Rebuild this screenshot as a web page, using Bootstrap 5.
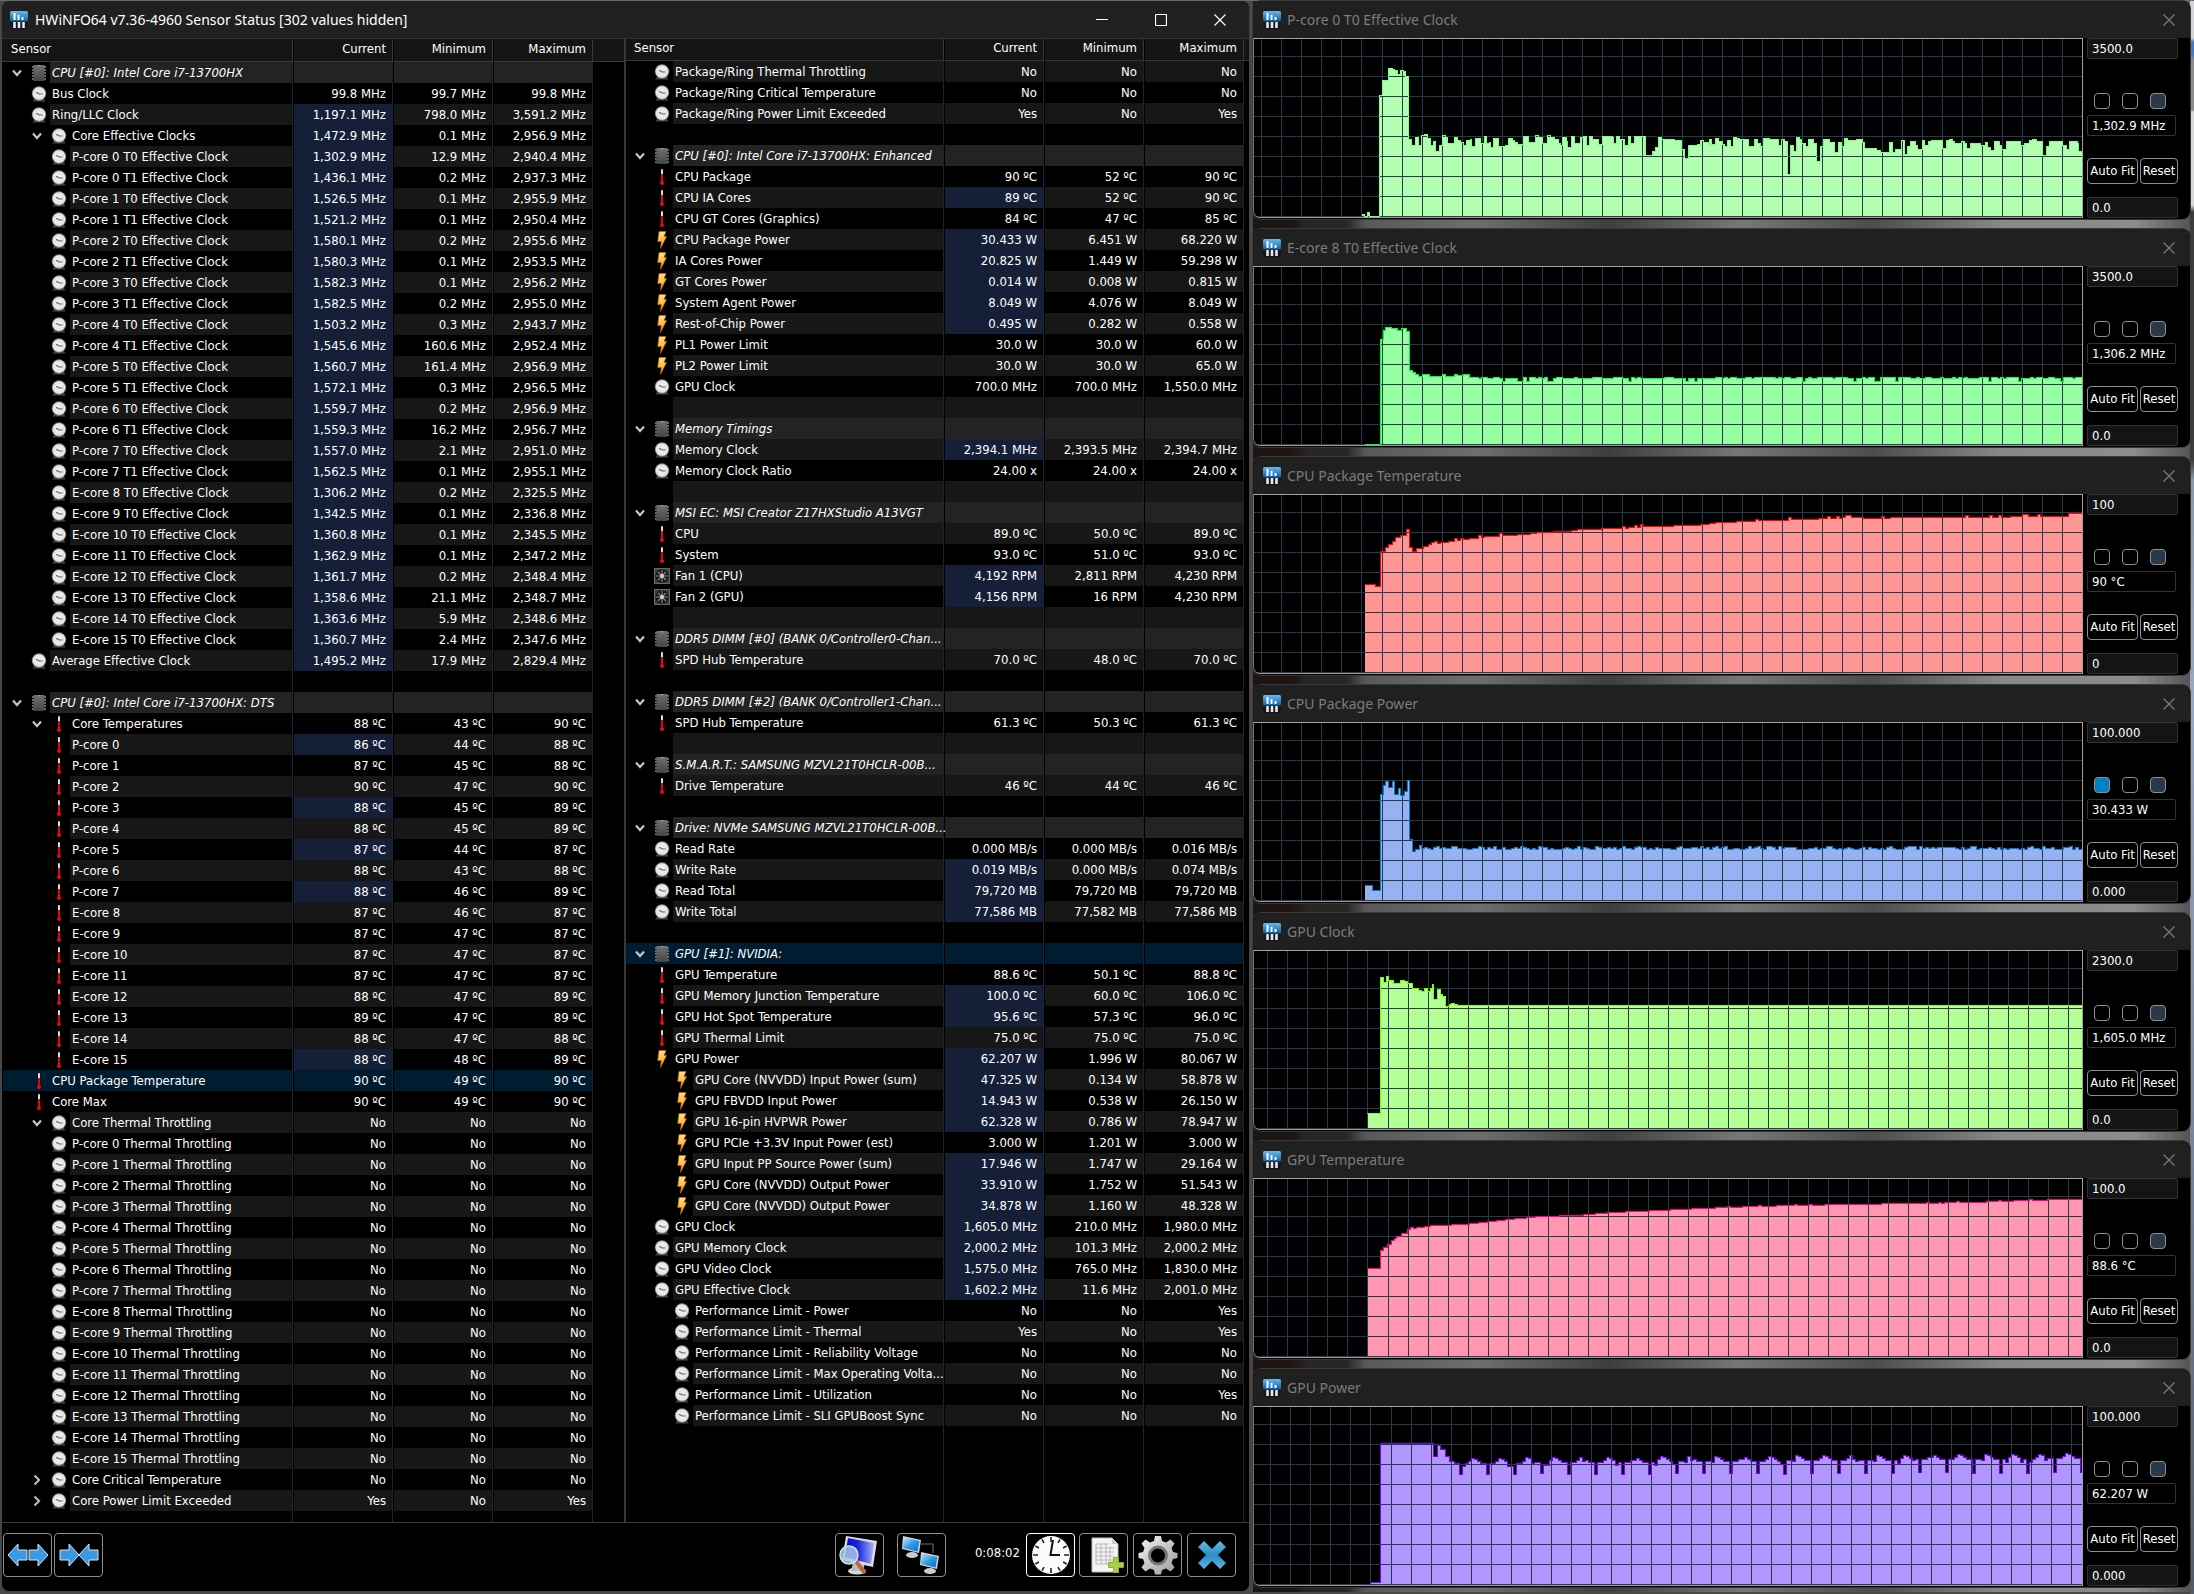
<!DOCTYPE html>
<html lang="en" data-bs-theme="dark">
<head>
<meta charset="utf-8">
<meta name="viewport" content="width=device-width, initial-scale=1">
<title>HWiNFO64 Sensor Status</title>
<link href="https://cdn.jsdelivr.net/npm/bootstrap@5.3.0/dist/css/bootstrap.min.css" rel="stylesheet">
<style>
  :root { --ui: "DejaVu Sans Condensed", "DejaVu Sans", sans-serif; --caption: "Noto Sans", "Open Sans", sans-serif; }
  body { background: #4a4a4a; font-family: var(--ui); font-size: 13px; line-height: 20px; color: #fff; }
  .desktop { display: grid; grid-template-columns: minmax(0, 1249fr) minmax(0, 937fr); gap: 3px; padding: 1px 4px 3px 1px; min-height: 100vh;
    background:
      linear-gradient(#6a6a6a, #6a6a6a) top / 100% 1px no-repeat,
      linear-gradient(#d4d4d8 0 38px, #4a78b8 42px 54px, #8c8c8c 60px 110px, #d8d8d8 112px 205px, #3c3c3c 212px 460px, #8c98a8 480px, #98a8c0 700px, #7c88a0 1100px, #555b68 1590px) right / 4px 100% no-repeat,
      #484848; }
  .win { background: #000; border-radius: 8px; overflow: hidden; }
  .caption-bar { height: 37px; background: #202020; font-family: var(--caption); font-size: 14px; }
  .caption-bar button { background: none; border: 0; padding: 0; color: inherit; display: flex; align-items: center; justify-content: center; }
  .win-btn { width: 59px; height: 37px; }
  .app-pic { flex: none; margin: 0 7px 0 8px; }

  .main-win { display: flex; flex-direction: column; border: 1px solid #444; border-top: 0; }
  .panes { display: grid; grid-template-columns: minmax(0, 622fr) minmax(0, 625fr); border-bottom: 1px solid #3a3a3a; }
  .pane { display: flex; border-top: 1px solid #333; background: linear-gradient(#141414 0 22px, #383838 22px 23px, #000 23px); }
  .pane-left { padding: 1px 31px 0 1px; }
  .pane-right { padding-right: 5px; border-left: 2px solid #383838; background: linear-gradient(#141414 0 21px, #383838 21px 22px, #000 22px); }
  .sensors { width: 100%; table-layout: fixed; border-collapse: separate; border-spacing: 0; }
  .sensors th, .sensors td { padding: 0; border-right: 1px solid #1b2233; white-space: nowrap; font-weight: 400; line-height: 21px; }
  .sensors thead th { height: 22px; line-height: 18px; background: #141414; border-color: #383838; border-bottom: 1px solid #383838; vertical-align: top; }
  .sensors thead th:first-child { padding-left: 8px; }
  .sensors .num { width: 100px; text-align: right; padding-right: 6px; background-clip: padding-box; border-left: 1px solid #000; }
  .sensors tbody tr, .sensors tbody .num { height: 21px; }
  .sensors tbody tr.filler, .sensors tbody tr.filler td { height: auto; }
  #leftSensors tr.filler td { height: 11px; }
  .namecell { display: flex; height: 21px; align-items: stretch; }
  .namecell .twist { width: 28px; display: flex; align-items: center; justify-content: center; }
  .namecell .pic { width: 19px; display: flex; align-items: center; }
  .namecell .txt { flex: 1 1 0; min-width: 0; padding-left: 2px; }
  .deep .namecell { padding-left: 20px; }
  .even .txt, .even .num { background-color: #171717; }
  .group .txt, .group .num { background-color: #232323; }
  .group .txt { font-style: italic; }
  .picked td, .picked .txt, .picked .num { background-color: #001c30; }
  .sensors .changed { background-color: #152038; }

  .toolbar-row { padding: 10px 13px 14px 1px; flex: 1; }
  .tool { width: 49px; height: 44px; background: #000; border: 1px solid #909090; border-radius: 4px; padding: 0; display: flex; align-items: center; justify-content: center; }
  .tool.active-tool { border-color: #fff; }
  .shrink { margin-left: 2px; }
  .remote { margin-left: 13px; }
  .uptime { margin: 0 6px 4px 29px; }
  .log { margin-left: 4px; }
  .spaced { margin-left: 5px; }

  .charts { display: flex; flex-direction: column; gap: 10px;
    background:
      linear-gradient(90deg, #1c1511 0 4%, #2a2624 6% 10%, transparent 12%),
      linear-gradient(90deg, #555 10%, #6e6e6e 24%, #3e3e3e 38%, #777 52%, #4c4c4c 66%, #888 80%, #8c8c8c 94%, #555 100%); }
  .chart-win { color: #7c7c7c; height: 218px; box-shadow: 0 0 0 1px #3a3a3a; flex: none; }
  .chart-win .app-pic { margin-left: 10px; margin-right: 6px; }
  .graph-close { width: 42px; height: 37px; }
  .plot { flex: 1 1 0; min-width: 0; height: 180px; border: 1px solid #a0a0a0; border-left-color: #777; border-bottom-left-radius: 7px; overflow: hidden; }
  .plot svg { display: block; width: 100%; height: 178px; }
  .side { width: 107px; padding: 0 0 0 4px; color: #fff; }
  .side input { display: block; width: 91px; background: #141414; color: #fff; border: 1px solid #333; border-radius: 2px; padding: 0 4px; font: inherit; line-height: 18px; }
  .field { height: 21px; }
  .side .reading { background: #000; width: 89px; height: 21px; }
  .swatches { gap: 12px; margin: 34px 0 6px 7px; }
  .swatch { width: 16px; height: 16px; padding: 0; border: 1px solid #909090; border-radius: 4px; background: #000; }
  .swatch-grid { background: #293949; }
  .fits { gap: 2px; margin: 22px 0 13px; }
  .fits button { height: 26px; background: #000; color: #fff; border: 1px solid #909090; border-radius: 4px; padding: 0; }
  .fit { width: 51px; } .reset { width: 38px; }
</style>
<script src="https://cdn.jsdelivr.net/npm/bootstrap@5.3.0/dist/js/bootstrap.bundle.min.js"></script>
</head>
<body>

<svg width="0" height="0" class="position-absolute" aria-hidden="true">
  <defs>
    <linearGradient id="gBlue" x1="0" y1="0" x2="0" y2="1"><stop offset="0" stop-color="#6cb8e8"/><stop offset="1" stop-color="#0c62a4"/></linearGradient>
    <linearGradient id="gBolt" x1="0" y1="0" x2="0" y2="1"><stop offset="0" stop-color="#ffe08a"/><stop offset="1" stop-color="#ff9800"/></linearGradient>
    <linearGradient id="gChip" x1="0" y1="0" x2="0" y2="1"><stop offset="0" stop-color="#707070"/><stop offset="1" stop-color="#454545"/></linearGradient>
    <linearGradient id="gSilver" x1="0" y1="0" x2="1" y2="1"><stop offset="0" stop-color="#f4f4f4"/><stop offset="1" stop-color="#9a9a9a"/></linearGradient>
    <linearGradient id="gScreen" x1="0" y1="0" x2="1" y2="1"><stop offset="0" stop-color="#bfe6fb"/><stop offset=".5" stop-color="#2f9be4"/><stop offset="1" stop-color="#0a6cc4"/></linearGradient>
    <linearGradient id="gDeep" x1="0" y1="0" x2="1" y2="0"><stop offset="0" stop-color="#0808c0"/><stop offset=".45" stop-color="#1828d8"/><stop offset="1" stop-color="#a8b4f8"/></linearGradient>
    <linearGradient id="gClose" x1="0" y1="0" x2="0" y2="1"><stop offset="0" stop-color="#6cb8e0"/><stop offset=".5" stop-color="#2c8cc8"/><stop offset="1" stop-color="#5cb4e4"/></linearGradient>
    <symbol id="i-app" viewBox="0 0 18 18"><rect width="18" height="18" rx="2" fill="#15181c"/><rect x="0" y="0" width="18" height="10.500" rx="1.500" fill="url(#gBlue)"/><path d="M4.500 2v7M8.500 4v5M12.500 6v3" stroke="#fff" stroke-width="2"/><path d="M4.500 11v6M9 11v6M13.500 11v6" stroke="#e8e8e8" stroke-width="2.600"/></symbol>
    <symbol id="i-g" viewBox="0 0 16 18"><path d="M1 3h14M1 6h14M1 9h14M1 12h14M1 15h14" stroke="#8a8a8a" stroke-width="1.300"/><rect x="2.500" y="1" width="11" height="16" fill="url(#gChip)"/><path d="M6.500 1a1.500 1.500 0 0 0 3 0z" fill="#999"/></symbol>
    <symbol id="i-c" viewBox="0 0 16 18"><path d="M3 14h10l1.500 2.500h-13z" fill="#444"/><circle cx="8" cy="8.500" r="7.200" fill="#8c8c8c"/><circle cx="8" cy="8.500" r="6.200" fill="#ececec"/><circle cx="8" cy="8.500" r="4.600" fill="none" stroke="#c8c8c8" stroke-width=".8" stroke-dasharray="1 1.400"/><path d="M5 7.500l3.500 1.300 3 .2" stroke="#555" stroke-width="1.100" fill="none"/><circle cx="8.500" cy="9" r="1" fill="#c88"/></symbol>
    <symbol id="i-t" viewBox="0 0 16 18"><rect x="7" y="1" width="2" height="12" rx="1" fill="#ddd"/><rect x="7" y="6" width="2" height="9" fill="#e00808"/><circle cx="8" cy="15" r="2" fill="#f00808"/></symbol>
    <symbol id="i-p" viewBox="0 0 16 18"><path d="M5 0.500h7L10 5.500h2.500L6.500 17.500l.8-7H3.700z" fill="url(#gBolt)" stroke="#b86a00" stroke-width=".6"/></symbol>
    <symbol id="i-f" viewBox="0 0 16 18"><rect x=".5" y="1.500" width="15" height="15" fill="#3c3c3c" stroke="#6a6a6a"/><circle cx="8" cy="9" r="6.600" fill="#161616"/><path d="M8 3v12M2 9h12M4 5l8 8M12 5l-8 8" stroke="#8c8c8c" stroke-width="1.100"/><circle cx="8" cy="9" r="2" fill="#e8c8c8"/></symbol>
    <symbol id="i-v" viewBox="0 0 12 12"><path d="M2 3.500l4 4.500 4-4.500" fill="none" stroke="#c4c4c4" stroke-width="2.200"/></symbol>
    <symbol id="i-r" viewBox="0 0 12 12"><path d="M3.500 1.500l4.500 4.500-4.500 4.500" fill="none" stroke="#b8b8b8" stroke-width="2.200"/></symbol>
    <symbol id="i-x" viewBox="0 0 12 12"><path d="M0.500 0.500l11 11M11.500 .5l-11 11" stroke="currentColor" stroke-width="1.100" fill="none"/></symbol>
  </defs>
</svg>

<main class="desktop">
  <section class="win main-win" aria-label="Sensor Status">
    <header class="caption-bar d-flex align-items-center">
      <svg width="18" height="18" class="app-pic"><use href="#i-app"/></svg>
      <span class="flex-fill text-truncate">HWiNFO64 v7.36-4960 Sensor Status [302 values hidden]</span>
      <button class="win-btn" aria-label="Minimize"><svg width="12" height="12" viewBox="0 0 12 12"><path d="M0 5.500h12" stroke="#fff"/></svg></button>
      <button class="win-btn" aria-label="Maximize"><svg width="12" height="12" viewBox="0 0 12 12"><rect x=".5" y=".5" width="11" height="11" rx="1" fill="none" stroke="#fff" stroke-width="1.200"/></svg></button>
      <button class="win-btn" aria-label="Close"><svg width="12" height="12"><use href="#i-x"/></svg></button>
    </header>

    <div class="panes">
      <div class="pane pane-left"><table class="sensors" id="leftSensors"></table></div>
      <div class="pane pane-right"><table class="sensors" id="rightSensors"></table></div>
    </div>

    <footer class="toolbar-row d-flex align-items-center">
      <button class="tool" aria-label="Expand columns"><svg width="42" height="28" viewBox="0 0 42 28"><g fill="#3a98e4" stroke="#d4e4f0"><path d="M1 14L11 3v6h9v10h-9v6z"/><path d="M41 14L31 3v6h-9v10h9v6z"/></g></svg></button>
      <button class="tool shrink" aria-label="Shrink columns"><svg width="42" height="28" viewBox="0 0 42 28"><g fill="#3a98e4" stroke="#d4e4f0"><path d="M21 14L11 3v6H2v10h9v6z"/><path d="M21 14L31 3v6h9v10h-9v6z"/></g></svg></button>
      <button class="tool ms-auto" aria-label="System summary"><svg width="40" height="40" viewBox="0 0 40 40"><ellipse cx="18" cy="36" rx="9" ry="3.500" fill="#d8d8d8"/><path d="M14 28h12l-2 8H12z" fill="#bbb"/><path d="M7 1l31 5-4 26L3 25z" fill="#dcdce4"/><path d="M9 3l26 5-3 21L6 22z" fill="url(#gDeep)"/><path d="M17 26l8 11" stroke="#b86a3c" stroke-width="4" stroke-linecap="round"/><circle cx="10" cy="20" r="9" fill="#a8c8e8" fill-opacity=".85" stroke="#d8e0e8" stroke-width="1.500"/></svg></button>
      <button class="tool remote" aria-label="Remote sensors"><svg width="40" height="40" viewBox="0 0 40 40"><path d="M20 9h12v9" fill="none" stroke="#777"/><g id="pc"><ellipse cx="11" cy="20" rx="6" ry="3" fill="#ccc"/><path d="M2 1l18 4-2 13L1 14z" fill="#cfd8e0"/><path d="M3 2.500l15.500 3.500-2 10.500L2 13z" fill="url(#gScreen)"/></g><use href="#pc" x="18" y="16"/></svg></button>
      <span class="uptime">0:08:02</span>
      <button class="tool active-tool" aria-label="Reset clock"><svg width="40" height="40" viewBox="0 0 40 40"><circle cx="20" cy="20" r="19" fill="#fbfbfb"/><g stroke="#222" stroke-width="1.600"><path d="M20 2v5M20 33v5M2 20h5M33 20h5"/><path d="M11 4.400l2 3.500M29 4.400l-2 3.500M11 35.600l2-3.500M29 35.600l-2-3.500M4.400 11l3.500 2M35.600 11l-3.500 2M4.400 29l3.500-2M35.600 29l-3.500-2"/></g><path d="M29 20H19.500L22 5" fill="none" stroke="#111" stroke-width="2"/></svg></button>
      <button class="tool log" aria-label="Log to file"><svg width="40" height="40" viewBox="0 0 40 40"><path d="M8 3h20l6 6v28H8z" fill="#f4f4f0" stroke="#bbb"/><path d="M28 3v6h6z" fill="#ccc"/><path d="M12 9h13M12 13h18M12 17h18M12 21h18M12 25h18M12 29h16M12 9v20M17 9v20M22 9v20M26 11v18" stroke="#b8b8b8" fill="none"/><path d="M29.500 22.500h5v5h5v5h-5v5h-5v-5h-5v-5h5z" fill="#a8d048" stroke="#88b030"/></svg></button>
      <button class="tool spaced" aria-label="Settings"><svg width="40" height="40" viewBox="0 0 40 40"><path d="M17 1h6l1 5 4 1.500 4.500-3 4 4-3 4.500L35 17l4.500 1v5L35 24l-1.500 4 3 4.500-4 4-4.500-3L24 35l-1 4.500h-6L16 35l-4-1.500-4.500 3-4-4 3-4.500L5 24 .5 23v-5L5 17l1.500-4-3-4.500 4-4 4.500 3L16 6z" fill="url(#gSilver)"/><circle cx="20" cy="20.500" r="8.500" fill="#000" stroke="#777" stroke-width="3"/></svg></button>
      <button class="tool spaced" aria-label="Close sensors"><svg width="32" height="32" viewBox="0 0 32 32"><path d="M8 2l8 8 8-8 6 6-8 8 8 8-6 6-8-8-8 8-6-6 8-8-8-8z" fill="url(#gClose)"/></svg></button>
    </footer>
  </section>

  <section class="charts" id="charts" aria-label="Sensor graphs"></section>
</main>

<script>
/* Row format: kind, depth, name, current, minimum, maximum, flags.
   kind: g group, c counter, t temperature, p power, f fan. flags: * changed, v open, > closed, s selected */
const clocks = [
  ["P-core 0 T0","1,302.9","12.9","2,940.4"],["P-core 0 T1","1,436.1","0.2","2,937.3"],["P-core 1 T0","1,526.5","0.1","2,955.9"],["P-core 1 T1","1,521.2","0.1","2,950.4"],
  ["P-core 2 T0","1,580.1","0.2","2,955.6"],["P-core 2 T1","1,580.3","0.1","2,953.5"],["P-core 3 T0","1,582.3","0.1","2,956.2"],["P-core 3 T1","1,582.5","0.2","2,955.0"],
  ["P-core 4 T0","1,503.2","0.3","2,943.7"],["P-core 4 T1","1,545.6","160.6","2,952.4"],["P-core 5 T0","1,560.7","161.4","2,956.9"],["P-core 5 T1","1,572.1","0.3","2,956.5"],
  ["P-core 6 T0","1,559.7","0.2","2,956.9"],["P-core 6 T1","1,559.3","16.2","2,956.7"],["P-core 7 T0","1,557.0","2.1","2,951.0"],["P-core 7 T1","1,562.5","0.1","2,955.1"],
  ["E-core 8 T0","1,306.2","0.2","2,325.5"],["E-core 9 T0","1,342.5","0.1","2,336.8"],["E-core 10 T0","1,360.8","0.1","2,345.5"],["E-core 11 T0","1,362.9","0.1","2,347.2"],
  ["E-core 12 T0","1,361.7","0.2","2,348.4"],["E-core 13 T0","1,358.6","21.1","2,348.7"],["E-core 14 T0","1,363.6","5.9","2,348.6"],["E-core 15 T0","1,360.7","2.4","2,347.6"]
].map(([n, ...v]) => ["c", 1, n + " Effective Clock", ...v.map(x => x + " MHz"), "*"]);

const coreName = i => (i < 8 ? "P-core " : "E-core ") + i;
const temps = [[86,44,88,"*"],[87,45,88],[90,47,90],[88,45,89,"*"],[88,45,89],[87,44,87,"*"],[88,43,88],[88,46,89,"*"],[87,46,87],[87,47,87],[87,47,87],[87,47,87],[88,47,89],[89,47,89],[88,47,88],[88,48,89,"*"]]
  .map((t, i) => ["t", 1, coreName(i), t[0] + " ºC", t[1] + " ºC", t[2] + " ºC", t[3] || ""]);
const throttle = temps.map((t, i) => ["c", 1, coreName(i) + " Thermal Throttling", "No", "No", "No", ""]);
const blank = ["", 0, "", "", "", "", ""];
const group = (n, f = "v") => ["g", 0, n, "", "", "", f];
const parse = s => s.trim().split("\n").map(l => { const p = l.trim().split("|"); return p.length < 3 ? (p[1] ? group(p[1]) : blank) : [p[0], +p[1], p[2], p[3], p[4], p[5], p[6] || ""]; });

const leftRows = [
  group("CPU [#0]: Intel Core i7-13700HX"),
  ...parse(`c|0|Bus Clock|99.8 MHz|99.7 MHz|99.8 MHz
    c|0|Ring/LLC Clock|1,197.1 MHz|798.0 MHz|3,591.2 MHz|*
    c|1|Core Effective Clocks|1,472.9 MHz|0.1 MHz|2,956.9 MHz|*v`),
  ...clocks,
  ["c", 0, "Average Effective Clock", "1,495.2 MHz", "17.9 MHz", "2,829.4 MHz", "*"],
  blank,
  group("CPU [#0]: Intel Core i7-13700HX: DTS"),
  ["t", 1, "Core Temperatures", "88 ºC", "43 ºC", "90 ºC", "v"],
  ...temps,
  ...parse(`t|0|CPU Package Temperature|90 ºC|49 ºC|90 ºC|s
    t|0|Core Max|90 ºC|49 ºC|90 ºC
    c|1|Core Thermal Throttling|No|No|No|v`),
  ...throttle,
  ...parse(`c|1|Core Critical Temperature|No|No|No|>
    c|1|Core Power Limit Exceeded|Yes|No|Yes|>`)
];
const rightRows = parse(`c|0|Package/Ring Thermal Throttling|No|No|No
  c|0|Package/Ring Critical Temperature|No|No|No
  c|0|Package/Ring Power Limit Exceeded|Yes|No|Yes
  -
  g|CPU [#0]: Intel Core i7-13700HX: Enhanced
  t|0|CPU Package|90 ºC|52 ºC|90 ºC
  t|0|CPU IA Cores|89 ºC|52 ºC|90 ºC|*
  t|0|CPU GT Cores (Graphics)|84 ºC|47 ºC|85 ºC
  p|0|CPU Package Power|30.433 W|6.451 W|68.220 W|*
  p|0|IA Cores Power|20.825 W|1.449 W|59.298 W|*
  p|0|GT Cores Power|0.014 W|0.008 W|0.815 W|*
  p|0|System Agent Power|8.049 W|4.076 W|8.049 W|*
  p|0|Rest-of-Chip Power|0.495 W|0.282 W|0.558 W|*
  p|0|PL1 Power Limit|30.0 W|30.0 W|60.0 W
  p|0|PL2 Power Limit|30.0 W|30.0 W|65.0 W
  c|0|GPU Clock|700.0 MHz|700.0 MHz|1,550.0 MHz
  -
  g|Memory Timings
  c|0|Memory Clock|2,394.1 MHz|2,393.5 MHz|2,394.7 MHz|*
  c|0|Memory Clock Ratio|24.00 x|24.00 x|24.00 x
  -
  g|MSI EC: MSI Creator Z17HXStudio A13VGT
  t|0|CPU|89.0 ºC|50.0 ºC|89.0 ºC
  t|0|System|93.0 ºC|51.0 ºC|93.0 ºC
  f|0|Fan 1 (CPU)|4,192 RPM|2,811 RPM|4,230 RPM|*
  f|0|Fan 2 (GPU)|4,156 RPM|16 RPM|4,230 RPM|*
  -
  g|DDR5 DIMM [#0] (BANK 0/Controller0-Chan...
  t|0|SPD Hub Temperature|70.0 ºC|48.0 ºC|70.0 ºC
  -
  g|DDR5 DIMM [#2] (BANK 0/Controller1-Chan...
  t|0|SPD Hub Temperature|61.3 ºC|50.3 ºC|61.3 ºC
  -
  g|S.M.A.R.T.: SAMSUNG MZVL21T0HCLR-00B...
  t|0|Drive Temperature|46 ºC|44 ºC|46 ºC
  -
  g|Drive: NVMe SAMSUNG MZVL21T0HCLR-00B...
  c|0|Read Rate|0.000 MB/s|0.000 MB/s|0.016 MB/s
  c|0|Write Rate|0.019 MB/s|0.000 MB/s|0.074 MB/s|*
  c|0|Read Total|79,720 MB|79,720 MB|79,720 MB|*
  c|0|Write Total|77,586 MB|77,582 MB|77,586 MB|*
  -
  g|0|GPU [#1]: NVIDIA:||||vs
  t|0|GPU Temperature|88.6 ºC|50.1 ºC|88.8 ºC
  t|0|GPU Memory Junction Temperature|100.0 ºC|60.0 ºC|106.0 ºC|*
  t|0|GPU Hot Spot Temperature|95.6 ºC|57.3 ºC|96.0 ºC|*
  t|0|GPU Thermal Limit|75.0 ºC|75.0 ºC|75.0 ºC
  p|0|GPU Power|62.207 W|1.996 W|80.067 W|*
  p|1|GPU Core (NVVDD) Input Power (sum)|47.325 W|0.134 W|58.878 W|*
  p|1|GPU FBVDD Input Power|14.943 W|0.538 W|26.150 W|*
  p|1|GPU 16-pin HVPWR Power|62.328 W|0.786 W|78.947 W|*
  p|1|GPU PCIe +3.3V Input Power (est)|3.000 W|1.201 W|3.000 W
  p|1|GPU Input PP Source Power (sum)|17.946 W|1.747 W|29.164 W|*
  p|1|GPU Core (NVVDD) Output Power|33.910 W|1.752 W|51.543 W|*
  p|1|GPU Core (NVVDD) Output Power|34.878 W|1.160 W|48.328 W|*
  c|0|GPU Clock|1,605.0 MHz|210.0 MHz|1,980.0 MHz|*
  c|0|GPU Memory Clock|2,000.2 MHz|101.3 MHz|2,000.2 MHz|*
  c|0|GPU Video Clock|1,575.0 MHz|765.0 MHz|1,830.0 MHz|*
  c|0|GPU Effective Clock|1,602.2 MHz|11.6 MHz|2,001.0 MHz|*
  c|1|Performance Limit - Power|No|No|Yes
  c|1|Performance Limit - Thermal|Yes|No|Yes
  c|1|Performance Limit - Reliability Voltage|No|No|No
  c|1|Performance Limit - Max Operating Volta...|No|No|No
  c|1|Performance Limit - Utilization|No|No|Yes
  c|1|Performance Limit - SLI GPUBoost Sync|No|No|No`);

function fillTable(id, rows) {
  const head = `<thead><tr><th scope="col">Sensor</th><th scope="col" class="num">Current</th><th scope="col" class="num">Minimum</th><th scope="col" class="num">Maximum</th></tr></thead>`;
  const body = rows.map(([k, d, n, a, b, c, f], i) => {
    const cls = [i % 2 ? "" : "even", k === "g" ? "group" : "", d ? "deep" : "", f.includes("s") ? "picked" : ""].join(" ").trim();
    const twist = f.includes("v") ? "v" : f.includes(">") ? "r" : "";
    return `<tr class="${cls}"><td><div class="namecell"><span class="twist">${twist ? `<svg width="12" height="12"><use href="#i-${twist}"/></svg>` : ""}</span>` +
      `<span class="pic">${k ? `<svg width="16" height="18"><use href="#i-${k}"/></svg>` : ""}</span><span class="txt">${n}</span></div></td>` +
      `<td class="num${f.includes("*") ? " changed" : ""}">${a}</td><td class="num">${b}</td><td class="num">${c}</td></tr>`;
  }).join("");
  document.getElementById(id).innerHTML = head + "<tbody>" + body + `<tr class="filler"><td></td><td class="num"></td><td class="num"></td><td class="num"></td></tr></tbody>`;
}
fillTable("leftSensors", leftRows);
fillTable("rightSensors", rightRows);

/* Small repeatable generator for the jitter of the steady stretches */
function rng(seed) { return () => (seed = (seed * 16807) % 2147483647) / 2147483647; }
const pairs = s => s.trim().split(/\s+/).map(p => p.split(":").map(Number));
function jitter(from, level, choices, seed) {
  const r = rng(seed), out = [];
  for (let x = from; x < 828; x += 3) out.push([x, level + choices[Math.floor(r() * choices.length)]]);
  return out;
}
/* Slow curve with rare one-sample bumps */
function bumps(points, every, seed, dy) {
  const r = rng(seed), out = [];
  points.forEach(([x, y], i) => {
    const end = i + 1 < points.length ? points[i + 1][0] : 828;
    const nextY = i + 1 < points.length ? points[i + 1][1] : y;
    out.push([x, y]);
    if (x > 150 && end - x > 9) for (let q = x + 3; q < end; q += 3) {
      const base = Math.round(y + (nextY - y) * (q - x) / (end - x));
      out.push([q, base - (r() < every ? dy : 0)]);
    }
  });
  return out;
}
const pcore = pairs(`337:643 346:649 355:637 361:649 391:286 400:241 418:205 430:208 436:211 445:223 454:211 463:214 469:229 478:418 487:436 499:412 508:436 517:406 526:403 535:415 544:436 553:424 559:454 571:436 580:406 589:412 595:430 616:412 625:421 634:427 643:436 652:421 664:418 667:439 679:415 694:430 706:409 712:430 721:427 724:442 733:415 748:439 769:436 778:415 790:421 796:427 805:433 823:409 838:427 859:406 868:412 880:430 895:406 904:412 916:418 928:430 934:436 940:412 952:424 955:442 967:409 976:430 994:412 1003:409 1012:436 1021:409 1030:418 1048:433 1060:409 1090:412 1093:430 1102:409 1111:418 1126:436 1138:409 1144:430 1156:409 1189:466 1210:454 1219:442 1228:412 1237:418 1276:421 1297:448 1306:475 1318:436 1345:433 1354:421 1363:427 1378:436 1381:418 1387:433 1399:415 1408:424 1419:433 1425:439 1434:421 1443:439 1452:412 1461:415 1470:418 1497:439 1515:418 1524:430 1533:439 1542:415 1560:418 1587:436 1596:418 1605:424 1614:523 1623:436 1632:454 1641:412 1650:418 1656:430 1668:439 1677:418 1692:430 1701:483 1713:439 1722:418 1740:427 1755:457 1767:427 1776:439 1785:415 1794:421 1821:418 1839:427 1845:445 1881:451 1893:457 1920:427 1929:457 1938:448 1956:421 1965:463 1974:439 1983:424 1998:436 2004:448 2019:421 2025:436 2037:424 2046:421 2079:445 2091:421 2100:418 2109:424 2115:430 2136:424 2145:430 2151:443 2163:430 2193:436 2208:427 2214:442 2223:451 2235:424 2250:436 2256:448 2271:424 2313:436 2325:430 2340:421 2349:418 2361:424 2379:466 2391:439 2400:424 2439:436 2451:448 2460:424 2484:430 2487:454`)
  .map(([x, y]) => [Math.round(x / 3) - 4, Math.min(178, Math.round(y / 3) - 38)]);
const ecore = [...pairs("111:178 127:73 130:64 132:61 138:62 144:64 148:62 153:65 156:104 159:106 162:108 165:110 169:108 176:110 189:108 192:110 201:108 204:109 210:108 216:111"), ...jitter(219, 112, [-1,-1,-1,0,0,0,-1,0,0,3,-1,0,-1,0], 7)];
const cpuTemp = bumps(pairs("111:90 122:92 127:57 132:53 135:50 139:47 142:43 147:41 153:35 156:53 159:57 163:54 170:52 175:50 189:48 204:46 219:44 234:42 271:40 285:38 312:37 327:35 366:34 393:32 441:31 465:28 496:27 511:26 553:25 598:23 619:24 651:23 700:23 812:22 815:19"), .1, 31, 2);
const cpuPower = [...pairs("111:163 119:168 127:72 130:63 132:59 135:65 139:59 141:72 145:66 147:73 151:69 154:58 156:117 159:129 162:127 166:123 168:126"), ...jitter(171, 126, [-1,0,1,-2,1,0,0,-1,1,0,-1,1,-2,0], 11)];
const gpuClock = pairs("113:163 127:27 130:32 133:26 135:30 140:33 147:30 151:31 154:33 159:38 165:40 168:41 171:38 174:41 177:38 179:34 180:49 184:39 187:44 189:46 192:56 196:54 198:53 201:54 204:55");
const gpuTemp = bumps(pairs("113:90 127:72 130:69 134:66 138:62 141:60 143:58 148:55 154:51 165:49 177:47 213:46 228:44 255:41 285:38 321:37 357:34 405:32 447:30 502:28 538:27 598:26 658:25 718:24 773:22 812:21"), .07, 5, 1);
const gpuPower = pairs("116:176 127:37 180:50 184:39 187:43 192:50 196:55 201:57");
{
  const shape = [11, 0, 0, -2, -5, -4, -2, 0, 0], r = rng(19);
  for (let x = 206, i = 0; x < 828; x += 3, i++) gpuPower.push([x, Math.round(57 - (x - 206) / 130) + shape[i % 9] + (i % 9 && r() < .12 ? 3 : 0) + (i % 9 === 0 ? Math.round((x - 206) / 200) : 0)]);
}

const graphs = [
  { name: "P-core 0 T0 Effective Clock", top: "3500.0", now: "1,302.9 MHz", low: "0.0", fill: "#b2ffb2", line: "#80ff80", data: pcore, grid: [7, 128] },
  { name: "E-core 8 T0 Effective Clock", top: "3500.0", now: "1,306.2 MHz", low: "0.0", fill: "#96ffa4", line: "#00ff40", data: ecore, grid: [7, 128] },
  { name: "CPU Package Temperature", top: "100", now: "90 °C", low: "0", fill: "#ff9696", line: "#ff0000", data: cpuTemp, grid: [7, 128] },
  { name: "CPU Package Power", top: "100.000", now: "30.433 W", low: "0.000", fill: "#96b2f2", line: "#0080c8", data: cpuPower, grid: [7, 128], pen: "#0080c8" },
  { name: "GPU Clock", top: "2300.0", now: "1,605.0 MHz", low: "0.0", fill: "#b2ff96", line: "#80ff00", data: gpuClock, grid: [13, 134] },
  { name: "GPU Temperature", top: "100.0", now: "88.6 °C", low: "0.0", fill: "#ff96b2", line: "#ff0080", data: gpuTemp, grid: [13, 134] },
  { name: "GPU Power", top: "100.000", now: "62.207 W", low: "0.000", fill: "#b296ff", line: "#8000ff", data: gpuPower, grid: [16, 137] }
];

function plot(g) {
  const start = g.data[0][0] - .5;
  let line = `M${start} ${g.data[0][1] + .5}`;
  g.data.slice(1).forEach(([x, y]) => line += `H${x - .5}V${y + .5}`);
  line += "H828";
  let grid = "";
  for (let x = g.grid[0]; x < g.grid[1] - 15; x += 20) grid += `M${x + .5} 0V180`;
  for (let x = g.grid[1]; x < 828; x += 20) grid += `M${x + .5} 0V180`;
  for (let y = 18; y < 180; y += 20) grid += `M0 ${y + .5}H828`;
  return `<svg viewBox="0 1 828 178" preserveAspectRatio="none" shape-rendering="crispEdges" role="img" aria-label="${g.name} history">
    <path d="${line}V180H${start}z" fill="${g.fill}"/><path d="${grid}" stroke="#293949" fill="none"/><path d="${line}" stroke="${g.line}" fill="none"/></svg>`;
}

document.getElementById("charts").innerHTML = graphs.map(g => `
  <article class="win chart-win">
    <header class="caption-bar d-flex align-items-center">
      <svg width="18" height="18" class="app-pic"><use href="#i-app"/></svg>
      <span class="flex-fill text-truncate">${g.name}</span>
      <button class="graph-close" aria-label="Close ${g.name}"><svg width="12" height="12"><use href="#i-x"/></svg></button>
    </header>
    <div class="d-flex">
      <div class="plot">${plot(g)}</div>
      <div class="side">
        <input class="field" type="text" aria-label="Upper bound" value="${g.top}">
        <div class="swatches d-flex">
          <button class="swatch" aria-label="Line color"${g.pen ? ` style="background:${g.pen}"` : ""}></button>
          <button class="swatch" aria-label="Background color"></button>
          <button class="swatch swatch-grid" aria-label="Grid color"></button>
        </div>
        <input class="reading" type="text" readonly aria-label="Current value" value="${g.now}">
        <div class="fits d-flex"><button class="fit">Auto Fit</button><button class="reset">Reset</button></div>
        <input class="field" type="text" aria-label="Lower bound" value="${g.low}">
      </div>
    </div>
  </article>`).join("");
</script>
</body>
</html>
